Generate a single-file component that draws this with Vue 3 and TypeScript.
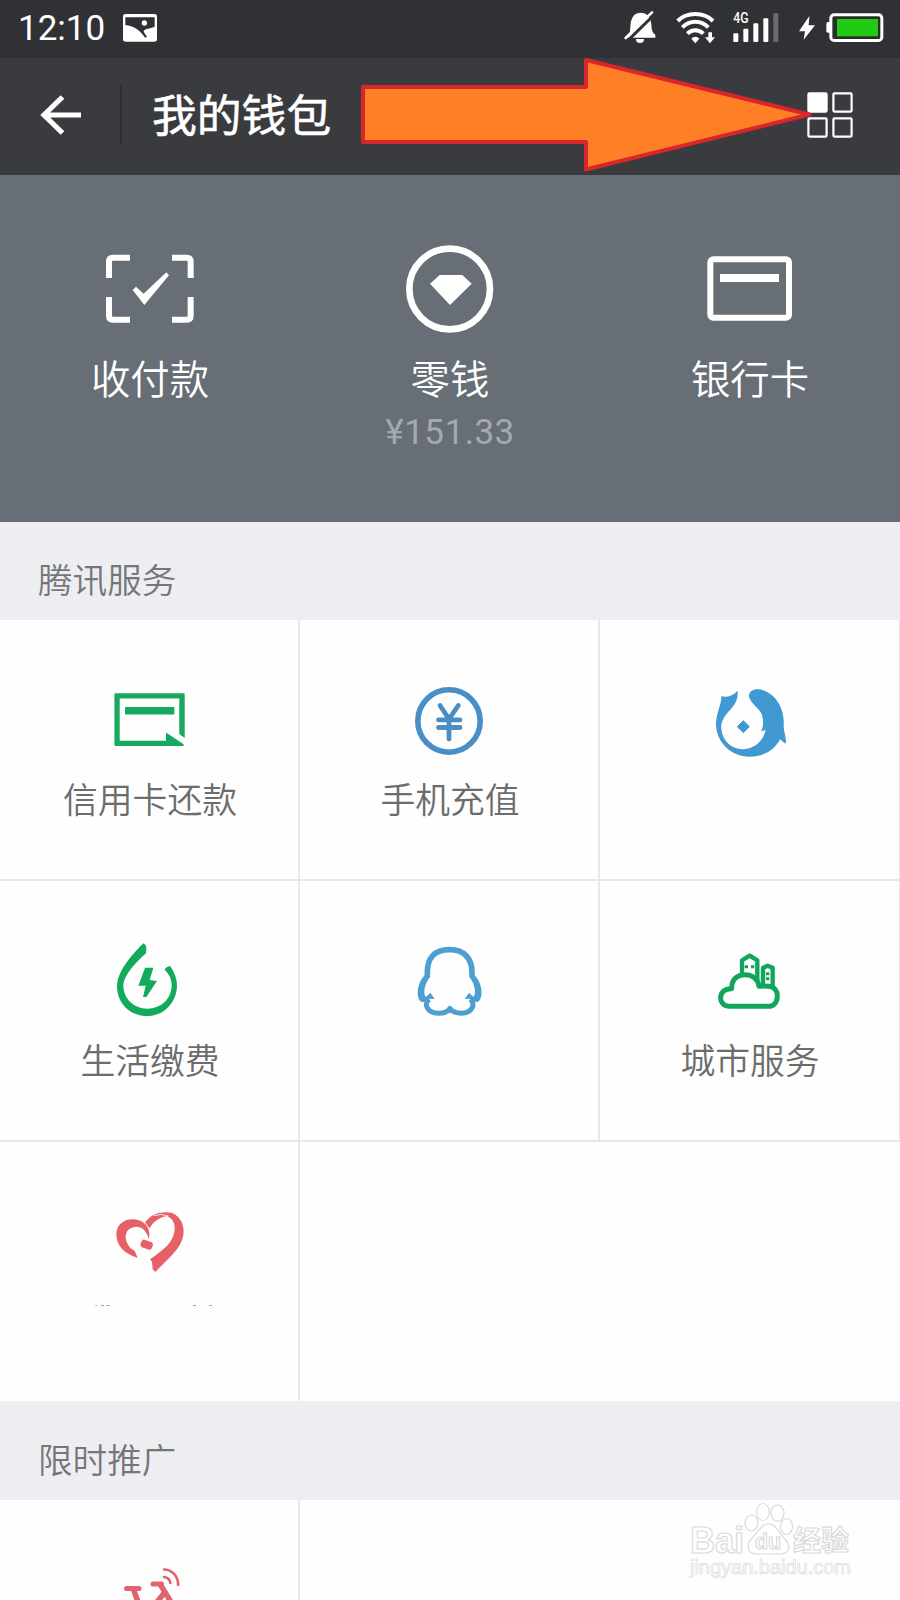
<script setup lang="ts">
interface Bar { x: number; y: number; fill: string }

const time = '12:10'
const title = '我的钱包'
const balance = '¥151.33'
const signal: Bar[] = [
  { x: 400, y: 100, fill: '#fff' },
  { x: 430, y: 86, fill: '#fff' },
  { x: 460, y: 70, fill: '#fff' },
  { x: 490, y: 55, fill: '#fff' },
  { x: 520, y: 40, fill: '#6b6b6d' },
]
</script>

<template>
  <div class="screen">
    <div class="status">
      <span class="time">{{ time }}</span>
      <svg class="photo" width="34" height="28" viewBox="0 0 102 84">
        <rect x="0" y="0" width="102" height="83" rx="8" fill="#fff" />
        <path d="M7 10H95V38C84 42 72 44 66 47C59 50 62 54 71 66C73 71 66 72 64 68C48 46 32 36 7 33Z" fill="#303134" />
        <circle cx="64" cy="27" r="8" fill="#fff" />
      </svg>
      <svg class="status-icons" width="300" height="58" viewBox="0 0 900 174">
        <path d="M82 113C92 104 90 86 92 70C95 50 105 38 122 38C140 38 152 50 154 72C155 88 156 98 166 104V113Z" fill="#fff" />
        <path d="M108 117H132A12 12 0 0 1 108 117Z" fill="#fff" />
        <path d="M84 121L165 42" stroke="#303134" stroke-width="9" />
        <path d="M77 114L156 37" stroke="#fff" stroke-width="8" stroke-linecap="round" />
        <g fill="none" stroke="#fff" stroke-width="12">
          <path d="M233 63C260 35 312 35 339 63" />
          <path d="M247 82C270 60 302 60 325 82" />
          <path d="M262 101C276 87 296 87 310 101" />
        </g>
        <path d="M274 116C280 108 292 108 298 116L286 130Z" fill="#fff" />
        <path d="M325 97H336V112H345L330 130L315 112H325Z" fill="#fff" />
        <text x="400" y="69" class="net" textLength="46" lengthAdjust="spacingAndGlyphs">4G</text>
        <rect v-for="b in signal" :key="b.x" :x="b.x" :y="b.y" width="15" :height="126 - b.y" rx="3" :fill="b.fill" />
        <path d="M628 48L597 94H615L611 119L645 76H626Z" fill="#fff" />
        <path d="M690 66H684Q679 66 679 72V92Q679 98 684 98H690Z" fill="#fff" />
        <rect x="692.500" y="44.500" width="153" height="77" rx="10" fill="#272f29" stroke="#fff" stroke-width="9" />
        <rect x="711" y="57" width="123" height="52" fill="#22cb13" />
      </svg>
    </div>

    <header class="bar">
      <svg class="back" width="44" height="44" viewBox="38 93 44 44">
        <path d="M81 115H44M62.500 97L44 115L62.500 133" fill="none" stroke="#fff" stroke-width="5.200" />
      </svg>
      <i class="divider"></i>
      <h1>{{ title }}</h1>
      <svg class="apps" width="48" height="48" viewBox="806 91 48 48" fill="none" stroke="#fff" stroke-width="2.200">
        <rect x="808.400" y="93.400" width="18.200" height="18.200" rx="1" fill="#fff" />
        <rect x="833.400" y="93.400" width="18.200" height="18.200" rx="1" />
        <rect x="808.400" y="118.400" width="18.200" height="18.200" rx="1" />
        <rect x="833.400" y="118.400" width="18.200" height="18.200" rx="1" />
      </svg>
    </header>

    <svg class="pointer" width="460" height="120" viewBox="356 54 460 120">
      <path d="M363 87H586V60L809.500 114.500L586 169.500V142H363Z" fill="#ff7f27" stroke="#d9262a" stroke-width="4" stroke-linejoin="round" />
    </svg>

    <section class="hero">
      <div class="hero-item">
        <svg width="100" height="100" viewBox="120 30 300 300">
          <path d="M147 144V95Q147 83 159 83H210M336 83H380Q392 83 392 95V144M147 201V257Q147 269 159 269H210M336 269H380Q392 269 392 257V201" fill="none" stroke="#fff" stroke-width="18" />
          <path d="M218 180L228 170L251 191L319 127L327 136L253 225Z" fill="#fff" />
        </svg>
        <span class="hero-label">收付款</span>
      </div>
      <div class="hero-item">
        <svg width="100" height="100" viewBox="90 30 300 300">
          <circle cx="239" cy="177" r="121" fill="none" stroke="#fff" stroke-width="20" />
          <path d="M209 135H277L305 161L240 225L180 161Z" fill="#fff" />
        </svg>
        <span class="hero-label">零钱</span>
        <span class="balance">{{ balance }}</span>
      </div>
      <div class="hero-item">
        <svg width="100" height="100" viewBox="90 30 300 300">
          <rect x="121" y="88" width="236" height="175" rx="9" fill="none" stroke="#fff" stroke-width="18" />
          <rect x="150" y="132" width="177" height="24" fill="#fff" />
        </svg>
        <span class="hero-label">银行卡</span>
      </div>
    </section>

    <h2 class="heading first">腾讯服务</h2>

    <section class="grid">
      <div class="cell">
        <svg width="82" height="80" viewBox="108 680 82 80" fill="#16a95f">
          <path d="M115.500 693.300H183.700Q184.700 693.300 184.700 694.300V738L179.300 734V698.500H119.700V740.800H166V732.500L184 744.500L183 746H115.500Q114.400 746 114.400 745V694.300Q114.400 693.300 115.500 693.300Z" />
          <rect x="125" y="707" width="49.300" height="7.500" />
        </svg>
        <span class="label">信用卡还款</span>
      </div>
      <div class="cell">
        <svg width="82" height="80" viewBox="408 680 82 80" fill="none" stroke="#4a8ec6">
          <circle cx="449" cy="721" r="31.200" stroke-width="5.600" />
          <path d="M440 705.500L449 719L458.300 705.500M449 719V739M438.500 719.900H460M438.500 727.500H460" stroke-width="4.800" stroke-linecap="round" />
        </svg>
        <span class="label">手机充值</span>
      </div>
      <div class="cell">
        <svg width="82" height="80" viewBox="54 30 246 240" fill="#4099d0">
          <path d="M94 78C108 84 128 78 143 62C145 90 133 107 115 125C98 145 92 160 94 178C98 215 125 238 160 238C195 236 220 212 227 180L213 184C222 170 221 140 212 127C200 108 178 95 177 78C177 62 192 56 208 58C255 65 285 115 281 165C281 185 287 195 288 215L286 221L270 208C255 240 220 260 180 260C120 260 80 215 78 165C77 130 95 105 94 78Z" />
          <path d="M160 152L178 170L160 188L142 170Z" stroke="#4099d0" stroke-width="3" stroke-linejoin="round" />
        </svg>
      </div>
      <div class="cell">
        <svg width="82" height="80" viewBox="144 63 246 240" fill="#12ab5b">
          <path d="M250 70Q260 76 259 86L258 100C225 130 192 165 190 195C190 235 220 266 262 266C305 266 335 235 335 195C335 175 325 160 314 149C318 142 326 137 332 140C345 160 352 180 351 200C348 250 310 288 262 288C210 288 172 250 171 200C171 150 225 95 250 70Z" />
          <path d="M255 143H280L269 180L291 183L259 231H249L257 197H235Z" />
        </svg>
        <span class="label">生活缴费</span>
      </div>
      <div class="cell">
        <svg width="82" height="80" viewBox="1044 63 246 240" fill="none" stroke="#4d9fd2" stroke-width="17" stroke-linejoin="round">
          <path d="M1102 163C1100 112 1125 89 1169 89C1212 89 1238 115 1236 163" stroke-linecap="round" />
          <path d="M1102 158C1068 184 1066 238 1086 246C1096 247 1104 240 1108 236L1124 237L1111 218L1098 230C1089 225 1092 190 1111 170ZM1236 158C1270 184 1272 238 1252 246C1242 247 1234 240 1230 236L1214 237L1227 218L1240 230C1249 225 1246 190 1227 170Z" fill="#4d9fd2" stroke="none" />
          <path d="M1108 238C1090 250 1100 279 1135 280C1155 280 1165 274 1170 265C1176 275 1190 280 1205 280C1238 279 1248 250 1230 238" stroke-width="15" />
        </svg>
      </div>
      <div class="cell">
        <svg width="82" height="80" viewBox="54 813 246 240" fill="none" stroke="#12a55c" stroke-width="15" stroke-linejoin="round">
          <path d="M156 922V871L179 857L202 871V935M219 945V893L233 887L248 893V950" stroke-width="13" />
          <path d="M118 1009C82 1009 82 954 125 956C124 928 143 914 165 914C190 914 204 930 207 949C228 946 262 945 262 978C262 1000 248 1009 236 1009Z" fill="#fff" />
          <path d="M164 890H174M183 890H193M228 911H238M228 926H238" stroke-width="9" />
        </svg>
        <span class="label">城市服务</span>
      </div>
      <div class="cell">
        <svg width="82" height="110" viewBox="234 33 246 330" class="heart" fill="#e66167">
          <path d="M323 204C280 190 258 165 259 130C262 100 285 87 310 88C343 90 364 112 357 148C350 126 340 110 318 110C295 112 288 125 287 140C288 160 300 176 314 182Z" />
          <rect x="332" y="152" width="36" height="24" rx="9" transform="rotate(20 350 164)" />
          <path d="M345 97C365 70 395 63 425 68C455 80 464 110 460 135C455 175 415 205 376 246L368 238L366 215L360 208C400 180 430 158 434 120C436 98 425 84 410 78C385 84 370 95 359 115Z" />
          <path d="M372 77Q394 69 415 78" fill="none" stroke="#fff" stroke-width="2.500" />
          <path d="M196 346.500H201M212 346.500H222M230 346.500H239M489 346.500H498M538 346.500H546" stroke="#a5a5a5" stroke-width="3" />
        </svg>
      </div>
      <div class="cell empty"></div>
    </section>

    <h2 class="heading second">限时推广</h2>

    <section class="grid last">
      <div class="cell">
        <svg width="82" height="40" viewBox="108 1560 82 40" fill="none" stroke="#e0646b">
          <path d="M126.500 1588.500H139M153 1584H161.500" stroke-width="5" stroke-linecap="round" />
          <path d="M133 1588L138 1602M160 1584L171 1602M165 1592L157 1602" stroke-width="5.500" />
          <path d="M163 1569.500C172 1569 179 1577 178 1586M163 1577Q170 1577 170.500 1584" stroke-width="2.600" />
        </svg>
      </div>
      <div class="cell empty"></div>
    </section>

    <svg class="watermark" width="170" height="90" viewBox="685 1500 170 90">
      <g fill="#fff" stroke="#dadada" stroke-width="1.200">
        <path d="M768.500 1524C776 1524 778 1532 784 1538C792 1546 789 1554 780 1554C772 1554 765 1554 757 1554C747 1554 746 1545 752 1538C759 1532 761 1524 768.500 1524Z" />
        <ellipse cx="751.500" cy="1523" rx="6.500" ry="8" />
        <ellipse cx="763" cy="1512" rx="6.300" ry="8.500" />
        <ellipse cx="777.500" cy="1513" rx="6.500" ry="8.200" />
        <ellipse cx="786.500" cy="1526.500" rx="6" ry="8" />
        <text x="690" y="1553" class="wm-main" textLength="54" lengthAdjust="spacingAndGlyphs">Bai</text>
        <text x="755" y="1549" class="wm-du" textLength="26" lengthAdjust="spacingAndGlyphs">du</text>
        <text x="793" y="1551" class="wm-cn" textLength="56">经验</text>
        <text x="690" y="1574" class="wm-url" textLength="161" lengthAdjust="spacingAndGlyphs">jingyan.baidu.com</text>
      </g>
    </svg>
  </div>
</template>

<style>
body {
  margin: 0;
}
</style>

<style scoped>
.screen {
  position: relative;
  width: 900px;
  height: 1600px;
  overflow: hidden;
  background: #fefefe;
  font-family: Roboto, "Noto Sans CJK SC", sans-serif;
}
.screen svg {
  display: block;
  flex: none;
}
.status {
  display: flex;
  height: 58px;
  background: #303134;
  color: #fff;
}
.time {
  width: 105px;
  padding-left: 18px;
  font-size: 35px;
  line-height: 58px;
}
.photo {
  margin-top: 14px;
}
.status-icons {
  margin-left: auto;
}
.net {
  font: 500 42px Roboto, sans-serif;
  fill: #fff;
}
.bar {
  display: flex;
  align-items: center;
  box-sizing: border-box;
  height: 117px;
  padding: 0 46px 3px 38px;
  background: #3a3b3e;
  color: #fff;
}
.divider {
  width: 2px;
  height: 60px;
  margin: 0 30px 0 38px;
  background: #2e2f32;
}
.bar h1 {
  margin: 0;
  padding-top: 4px;
  font-size: 44.8px;
  font-weight: 400;
  line-height: 60px;
  -webkit-text-stroke: 0.6px #fff;
}
.apps {
  margin-left: auto;
}
.pointer {
  position: absolute;
  left: 356px;
  top: 54px;
}
.hero {
  display: grid;
  grid-template-columns: repeat(3, 300px);
  height: 347px;
  background: #676e76;
  color: #fff;
}
.hero-item {
  display: flex;
  flex-direction: column;
  align-items: center;
  padding-top: 65px;
}
.hero-label {
  margin-top: 13px;
  font-size: 39.4px;
  font-weight: 350;
  line-height: 56px;
}
.balance {
  margin-top: 3px;
  font-size: 35px;
  font-weight: 400;
  line-height: 42px;
  letter-spacing: 0.5px;
  color: #a4a9b0;
}
.heading {
  box-sizing: border-box;
  height: 99px;
  margin: 0;
  padding: 3px 0 0 38px;
  background: #edeef2;
  color: #76767a;
  font-size: 34.6px;
  font-weight: 350;
  line-height: 112px;
}
.heading.first {
  height: 98px;
}
.heading.second {
  padding-top: 4px;
}
.grid {
  display: grid;
  grid-template-columns: repeat(3, 300px);
  grid-template-rows: 261px 261px 259px;
}
.cell {
  display: flex;
  flex-direction: column;
  align-items: center;
  box-sizing: border-box;
  padding-top: 60px;
  border-right: 2px solid #e7e7e8;
  border-bottom: 2px solid #e7e7e8;
}
.cell:nth-child(3n) {
  padding-right: 1px;
  border-right-width: 1px;
}
.cell:nth-child(7) {
  padding-top: 59px;
  border-bottom: 0;
}
.label {
  margin: 16px 0 0 2px;
  font-size: 34.8px;
  font-weight: 350;
  line-height: 50px;
  color: #6c6c6c;
  white-space: nowrap;
}
.heart {
  overflow: visible;
}
.cell.empty {
  grid-column: span 2;
  border: 0;
}
.grid.last {
  grid-template-rows: 100px;
}
.last .cell {
  border-bottom: 0;
}
.watermark {
  position: absolute;
  left: 685px;
  top: 1500px;
}
.wm-main {
  font: bold 37px "Liberation Sans", sans-serif;
}
.wm-du {
  font: bold 22px "Liberation Sans", sans-serif;
}
.wm-cn {
  font: bold 28px "Noto Sans CJK SC", sans-serif;
}
.wm-url {
  font: 20px "Liberation Sans", sans-serif;
  stroke-width: 0.7px;
}
</style>
